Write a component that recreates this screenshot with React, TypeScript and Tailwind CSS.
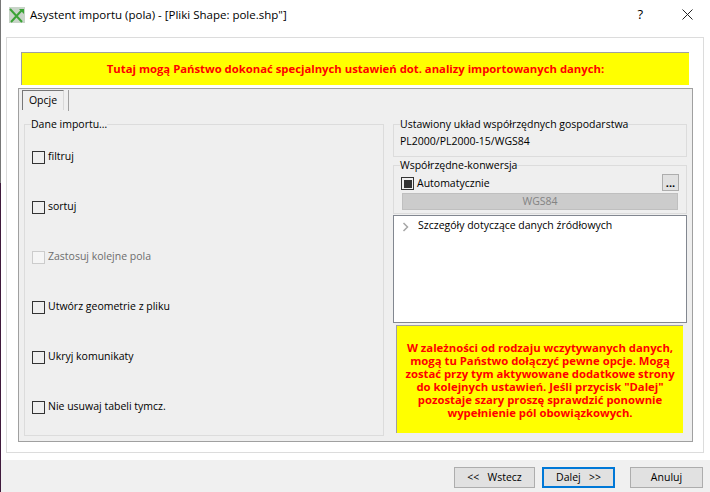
const font = "font-['Open_Sans','Noto_Sans',sans-serif]";

function Check({ label, disabled = false }: { label: string; disabled?: boolean }) {
  return (
    <label className={`flex items-center gap-[3px] h-[16px] text-[10.5px] ${disabled ? 'text-[#6d6d6d]' : 'text-black'}`}>
      <span className={`block w-[13px] h-[13px] border ${disabled ? 'border-[#cccccc] bg-[#f5f5f5]' : 'border-[#333333]'}`} />
      {label}
    </label>
  );
}

function Group({ title, className, children }: { title: string; className: string; children: React.ReactNode }) {
  return (
    <fieldset className={`border border-[#dcdcdc] ${className}`}>
      <legend className="ml-[6px] text-[10.5px] leading-[14px] text-black">{title}</legend>
      {children}
    </fieldset>
  );
}

function Button({ label, active = false, className }: { label: string; active?: boolean; className: string }) {
  return (
    <button
      className={`h-[21px] text-[10.5px] text-black whitespace-pre ${active ? 'border-2 border-[#0078d7]' : 'border border-[#adadad]'} bg-[#e1e1e1] ${className}`}
    >
      {label}
    </button>
  );
}

export default function App() {
  return (
    <div className={`${font} w-[710px] h-[492px] bg-white overflow-hidden flex`}>
      <div className="w-[1px] shrink-0 flex flex-col">
        <div className="h-[183px] bg-[#777777]" />
        <div className="flex-1 bg-[#3f1a3c]" />
      </div>
      <div className="flex-1 flex flex-col">
        <header className="h-[30px] flex items-center pl-[8px] shrink-0">
          <svg width="16" height="16" viewBox="0 0 16 16" className="mr-[5px]">
            <rect width="16" height="16" fill="#c8d4c8" />
            <path d="M1 2 L13 15 M2 15 L13 3" stroke="#3aa335" strokeWidth="2" fill="none" />
            <path d="M10 2 H15 V7 Z" fill="#3aa335" />
          </svg>
          <span className="text-[11.5px] text-black">Asystent importu (pola) - [Pliki Shape: pole.shp"]</span>
          <span className="ml-auto text-[13px] mr-[39px] text-black">?</span>
          <svg width="11" height="11" viewBox="0 0 11 11" className="mr-[17px] mt-[-2px]">
            <path d="M0.5 0.5 L10.5 10.5 M10.5 0.5 L0.5 10.5" stroke="#222222" strokeWidth="1" />
          </svg>
        </header>

        <div className="h-[430px] shrink-0 px-[5px] pt-[7px]">
          <main className="h-[416px] w-[698px] border border-[#dcdcdc] px-[11px] pt-[14px]">
            <div className="mx-[3px] h-[33px] w-[668px] bg-[#ffff00] border-t border-l border-[#a0a0a0] flex items-center justify-center text-[11.3px] font-bold text-[#ff0000]">
              Tutaj mogą Państwo dokonać specjalnych ustawień dot. analizy importowanych danych:
            </div>
            <div className="mt-[3px] h-[354px] w-[675px] border border-[#a0a0a0] bg-[#efefef] flex flex-col">
              <div className="h-[22px] shrink-0 flex items-end pl-[3px]">
                <div className="h-[21px] w-[47px] border-r border-[#a0a0a0] flex">
                  <div className="h-[20px] w-[42px] pt-[1px] border-l border-t border-[#777777] border-r-[#d8d8d8] border-r flex items-center justify-center text-[10.5px]">Opcje</div>
                </div>
              </div>
              <div className="flex-1 flex pl-[5px] pr-[4px] pt-[6px] gap-[9px]">
                <Group title="Dane importu…" className="w-[360px] h-[319px]">
                  <div className="flex flex-col gap-[34px] pl-[7px] pt-[18px]">
                    <Check label="filtruj" />
                    <Check label="sortuj" />
                    <Check label="Zastosuj kolejne pola" disabled />
                    <Check label="Utwórz geometrie z pliku" />
                    <Check label="Ukryj komunikaty" />
                    <Check label="Nie usuwaj tabeli tymcz." />
                  </div>
                </Group>
                <div className="w-[294px] flex flex-col">
                  <Group title="Ustawiony układ współrzędnych gospodarstwa" className="h-[40px]">
                    <div className="pl-[6px] pt-[3px] text-[10.5px]">PL2000/PL2000-15/WGS84</div>
                  </Group>
                  <Group title="Współrzędne-konwersja" className="mt-[1px] h-[56px]">
                    <div className="flex items-center h-[21px] pt-[2px] justify-between px-[7px]">
                      <label className="flex items-center gap-[3px] text-[10.5px]">
                        <span className="w-[13px] h-[13px] border border-[#333333] flex items-center justify-center">
                          <span className="block w-[8px] h-[8px] bg-[#333333]" />
                        </span>
                        Automatycznie
                      </label>
                      <button className="w-[17px] h-[17px] mt-[-3px] border border-[#adadad] bg-[#e1e1e1] text-[11px] font-bold leading-[11px]">...</button>
                    </div>
                    <div className="mx-[8px] h-[17px] bg-[#cccccc] border border-[#bfbfbf] flex items-center justify-center text-[10.5px] text-[#838383]">WGS84</div>
                  </Group>
                  <div className="mt-[1px] h-[108px] border border-[#828790] bg-white flex items-start pl-[8px] pt-[2px] text-[10.5px]">
                    <svg width="8" height="10" viewBox="0 0 8 10" className="mt-[4px] mr-[7px]">
                      <path d="M1.5 1 L5.5 5 L1.5 9" stroke="#a6a6a6" strokeWidth="1.5" fill="none" />
                    </svg>
                    <span className="ml-[1px]">Szczegóły dotyczące danych źródłowych</span>
                  </div>
                  <div className="mt-[2px] ml-[3px] h-[108px] w-[287px] bg-[#ffff00] border-l border-t border-[#a0a0a0] flex items-center justify-center text-center text-[11.3px] leading-[13px] font-bold text-[#ff0000] whitespace-nowrap">
                    <p>
                      W zależności od rodzaju wczytywanych danych,<br />
                      mogą tu Państwo dołączyć pewne opcje. Mogą<br />
                      zostać przy tym aktywowane dodatkowe strony<br />
                      do kolejnych ustawień. Jeśli przycisk "Dalej"<br />
                      pozostaje szary proszę sprawdzić ponownie<br />
                      wypełnienie pól obowiązkowych.
                    </p>
                  </div>
                </div>
              </div>
            </div>
          </main>
        </div>

        <footer className="flex-1 bg-[#f0f0f0] flex items-start pt-[7px] pl-[453px]">
          <Button label="<<   Wstecz" className="w-[81px]" />
          <Button label="Dalej   >>" active className="w-[73px] ml-[7px]" />
          <Button label="Anuluj" className="w-[73px] ml-[15px]" />
        </footer>
      </div>
    </div>
  );
}
